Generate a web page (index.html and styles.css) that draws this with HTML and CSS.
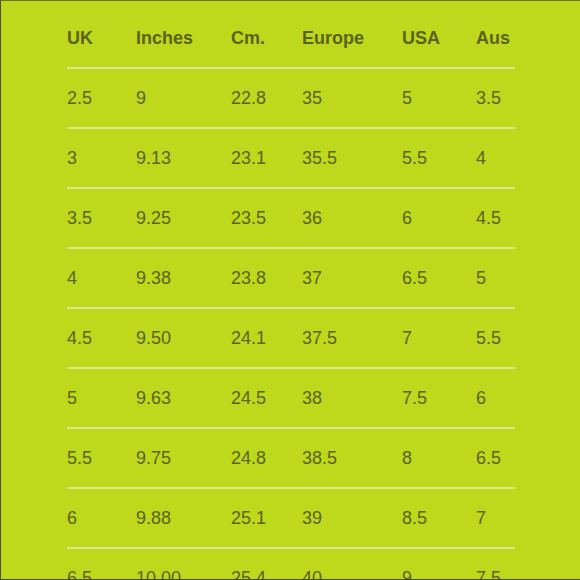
FILE: index.html
```html
<!DOCTYPE html>
<html>
<head>
<meta charset="utf-8">
<link rel="stylesheet" href="styles.css">
</head>
<body>
<div class="page">
  <table class="sizes">
    <colgroup>
      <col class="c1"><col class="c2"><col class="c3"><col class="c4"><col class="c5"><col class="c6">
    </colgroup>
    <thead>
      <tr><th>UK</th><th>Inches</th><th>Cm.</th><th>Europe</th><th>USA</th><th>Aus</th></tr>
    </thead>
    <tbody>
      <tr><td>2.5</td><td>9</td><td>22.8</td><td>35</td><td>5</td><td>3.5</td></tr>
      <tr><td>3</td><td>9.13</td><td>23.1</td><td>35.5</td><td>5.5</td><td>4</td></tr>
      <tr><td>3.5</td><td>9.25</td><td>23.5</td><td>36</td><td>6</td><td>4.5</td></tr>
      <tr><td>4</td><td>9.38</td><td>23.8</td><td>37</td><td>6.5</td><td>5</td></tr>
      <tr><td>4.5</td><td>9.50</td><td>24.1</td><td>37.5</td><td>7</td><td>5.5</td></tr>
      <tr><td>5</td><td>9.63</td><td>24.5</td><td>38</td><td>7.5</td><td>6</td></tr>
      <tr><td>5.5</td><td>9.75</td><td>24.8</td><td>38.5</td><td>8</td><td>6.5</td></tr>
      <tr><td>6</td><td>9.88</td><td>25.1</td><td>39</td><td>8.5</td><td>7</td></tr>
      <tr><td>6.5</td><td>10.00</td><td>25.4</td><td>40</td><td>9</td><td>7.5</td></tr>
    </tbody>
  </table>
</div>
</body>
</html>
```
FILE: styles.css
```css
html, body {
  margin: 0;
  padding: 0;
  background: #bed81c;
}
.page {
  width: 579px;
  height: 578px;
  overflow: hidden;
  background: #bed81c;
  border-left: 1px solid #4a5018;
  border-top: 1px solid #6a7420;
  border-bottom: 1px solid #4a5018;
  font-family: "Liberation Sans", Arial, sans-serif;
  color: #5a6321;
}
.sizes {
  border-collapse: collapse;
  margin-left: 66px;
  margin-top: 8px;
  width: 448px;
  table-layout: fixed;
}
.c1 { width: 69px; }
.c2 { width: 95px; }
.c3 { width: 71px; }
.c4 { width: 100px; }
.c5 { width: 74px; }
.c6 { width: 39px; }
.sizes th,
.sizes td {
  height: 58px;
  padding: 0;
  text-align: left;
  vertical-align: middle;
  font-size: 18px;
  line-height: 20px;
  white-space: nowrap;
  border-bottom: 2px solid #d9e98c;
}
.sizes th {
  font-weight: bold;
}
.sizes td {
  font-weight: normal;
}
```
